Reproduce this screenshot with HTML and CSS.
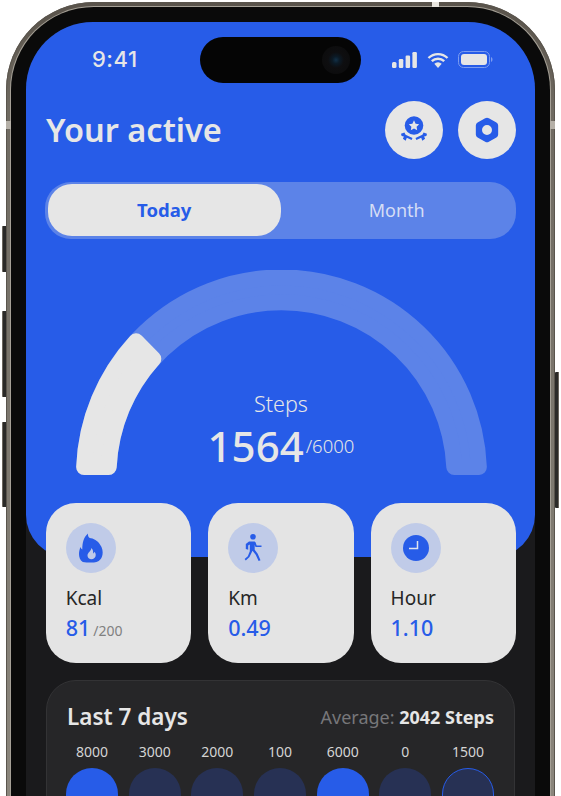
FILE: index.html
```html
<!DOCTYPE html>
<html lang="en">
<head>
    <meta charset="UTF-8">
    <meta name="viewport" content="width=device-width, initial-scale=1.0">
    <title>Your active</title>
    <link rel="stylesheet" href="styles.css">
</head>
<body>
    <div class="phone">
        <span class="side-btn btn-mute"></span>
        <span class="side-btn btn-up"></span>
        <span class="side-btn btn-down"></span>
        <span class="side-btn btn-power"></span>
        <span class="band band-left"></span>
        <span class="band band-right"></span>
        <span class="band band-top"></span>

        <div class="bezel">
            <div class="screen">
                <section class="hero">
                    <div class="status">
                        <span class="time">9:41</span>
                        <div class="island"><span class="camera"></span></div>
                        <div class="status-icons">
                            <svg width="25" height="16" viewBox="0 0 25 16">
                                <rect x="0" y="10" width="4.500" height="6" rx="1.500" fill="#e6e6e6"/>
                                <rect x="6.800" y="7" width="4.500" height="9" rx="1.200" fill="#e6e6e6"/>
                                <rect x="13.600" y="3.500" width="4.500" height="12.500" rx="1.200" fill="#e6e6e6"/>
                                <rect x="20.400" y="0" width="4.500" height="16" rx="1.200" fill="#e6e6e6"/>
                            </svg>
                            <svg width="22" height="16" viewBox="0 0 22 16">
                                <path d="M1.500 6A13.500 13.500 0 0 1 20.500 6M4.800 9.200A9 9 0 0 1 17.200 9.200" fill="none" stroke="#e6e6e6" stroke-width="2.400"/>
                                <path d="M7.300 11.800A5 5 0 0 1 14.700 11.800L11 16Z" fill="#e6e6e6"/>
                            </svg>
                            <svg width="35" height="17" viewBox="0 0 35 17">
                                <rect x="0.500" y="0.500" width="31" height="16" rx="5" fill="none" stroke="#7c9cf0"/>
                                <rect x="3" y="3" width="26" height="11" rx="3" fill="#e6e6e6"/>
                                <path d="M33 6V11C34 10.600 34.500 9.600 34.500 8.500S34 6.400 33 6Z" fill="#7c9cf0"/>
                            </svg>
                        </div>
                    </div>

                    <header class="top-row">
                        <h1>Your active</h1>
                        <div class="round-btns">
                            <div class="round-btn">
                                <svg width="30" height="30" viewBox="0 0 30 30">
                                    <circle cx="15" cy="10.500" r="9.300" fill="#275ce8"/>
                                    <path fill="#e6e6e6" d="M15 5.300l1.600 3.400 3.600.5-2.600 2.500.6 3.600-3.200-1.700-3.200 1.700.6-3.600-2.600-2.500 3.600-.5Z"/>
                                    <path fill="#275ce8" d="M2 18.800l3.400-1.200 1.200 2.100 6.900 3.300-.9 2-4.800-2.200-1.100 3-2.800-2 1-2.400-2.300-.4Z"/>
                                    <path fill="#275ce8" d="M28 18.800l-3.400-1.200-1.200 2.100-6.900 3.300.9 2 4.800-2.200 1.100 3 2.800-2-1-2.400 2.300-.4Z"/>
                                </svg>
                            </div>
                            <div class="round-btn">
                                <svg width="24" height="26" viewBox="0 0 26 28">
                                    <path fill="#275ce8" fill-rule="evenodd" d="M11 1.200a4 4 0 0 1 4 0l8.200 4.700a3.800 3.800 0 0 1 1.900 3.300v9.600a3.800 3.800 0 0 1-1.900 3.300L15 26.800a4 4 0 0 1-4 0l-8.200-4.700A3.800 3.800 0 0 1 .9 18.800V9.200a3.800 3.800 0 0 1 1.900-3.300ZM13 8.600a5.400 5.400 0 1 0 0 10.800a5.400 5.400 0 0 0 0-10.800Z"/>
                                </svg>
                            </div>
                        </div>
                    </header>

                    <div class="toggle">
                        <div class="toggle-item active">Today</div>
                        <div class="toggle-item">Month</div>
                    </div>

                    <div class="gauge">
                        <svg class="gauge-arc" width="411" height="205" viewBox="0 0 411 205">
                            <path d="M8.160 197A197.500 197.500 0 0 1 402.840 197L378.300 197A173 173 0 0 0 32.700 197Z" fill="#5c83e8" stroke="#5c83e8" stroke-width="16" stroke-linejoin="round"/>
                            <path d="M8.160 197A197.500 197.500 0 0 1 60.100 71.300L77.300 88.800A173 173 0 0 0 32.700 197Z" fill="#e6e6e6" stroke="#e6e6e6" stroke-width="16" stroke-linejoin="round"/>
                        </svg>
                        <div class="gauge-text">
                            <div class="gauge-label">Steps</div>
                            <div class="gauge-value">1564<small>/6000</small></div>
                        </div>
                    </div>
                </section>

                <div class="cards">
                    <div class="card">
                        <div class="card-icon">
                            <svg width="24" height="30" viewBox="0 0 24 30">
                                <path fill="#275ce8" fill-rule="evenodd" d="M3.800 29C1 27.300 0 24 0 21c0-2.800.8-5 1.400-7 .5 1.200 1 2 1.900 2.500C3.200 10.500 4.600 4 9 .5c-.4 3 1 4.500 3 4.800 4 .6 8 3.600 10.500 8.700 2 4.200 1.300 9.500-1 12.200C19.500 29 16 29.500 12 29.500c-3 0-6-.1-8.200-.5ZM12.300 15c.2 2.500-2.500 3.700-3.500 6-.9 2.200.3 5 3.200 5.200 3 .1 5-2 4.700-4.800-.1-1.200-.8-2.200-1.400-2.700-.1 1-.6 1.500-1.200 1.700.3-2-.2-3.900-1.800-5.400Z"/>
                            </svg>
                        </div>
                        <div class="card-name">Kcal</div>
                        <div class="card-value">81<small>/200</small></div>
                    </div>
                    <div class="card">
                        <div class="card-icon">
                            <svg width="20" height="28" viewBox="0 0 20 28" fill="#275ce8">
                                <circle cx="10" cy="2.800" r="2.800"/>
                                <path d="M6 7.500h4.800c1 0 1.700.5 2 1.400l.9 2.700h4.800v1.500h-6l-.8-2.300v5l3 4 2.800 6.500-1.900.8-2.900-6.400-3.200-3.900-3 6.300-3.700 3.400-1.200-1.400 3.200-2.900 2-5V10.400L5.200 11.500v4.300l-2.400-.8V9.900Z"/>
                            </svg>
                        </div>
                        <div class="card-name">Km</div>
                        <div class="card-value">0.49</div>
                    </div>
                    <div class="card">
                        <div class="card-icon">
                            <svg width="26" height="26" viewBox="0 0 26 26">
                                <circle cx="13" cy="13" r="13" fill="#275ce8"/>
                                <path d="M14.500 6V13.500H6" fill="none" stroke="#dfe3ee" stroke-width="1.500"/>
                            </svg>
                        </div>
                        <div class="card-name">Hour</div>
                        <div class="card-value">1.10</div>
                    </div>
                </div>

                <section class="week">
                    <div class="week-head">
                        <h2>Last 7 days</h2>
                        <div class="average">Average: <b>2042 Steps</b></div>
                    </div>
                    <div class="days">
                        <div class="day"><span>8000</span><div class="bar done"></div></div>
                        <div class="day"><span>3000</span><div class="bar"></div></div>
                        <div class="day"><span>2000</span><div class="bar"></div></div>
                        <div class="day"><span>100</span><div class="bar"></div></div>
                        <div class="day"><span>6000</span><div class="bar done"></div></div>
                        <div class="day"><span>0</span><div class="bar"></div></div>
                        <div class="day"><span>1500</span><div class="bar today"></div></div>
                    </div>
                </section>
            </div>
        </div>
    </div>
</body>
</html>
```

FILE: styles.css
```css
html, body {
    height: 796px;
    margin: 0;
    overflow: hidden;
    background-color: #fff;
}
body {
    font-family: "Noto Sans", Arial, sans-serif;
    padding: 2px 0 0 6px;
    box-sizing: border-box;
}
h1, h2 {
    margin: 0;
}

/* phone frame */
.phone {
    position: relative;
    width: 549px;
    height: 900px;
    padding: 5px;
    box-sizing: border-box;
    border-radius: 88px;
    background: linear-gradient(180deg, #59534b 0, #6f6a61 12%, #8f8a80 100%);
    box-shadow: inset 0 0 0 1px #5a554d;
}
.bezel {
    height: 100%;
    padding: 15px 15px 0;
    box-sizing: border-box;
    border-radius: 83px;
    background-color: #0a0a0a;
    box-shadow: 0 0 0 1px #a5a096;
}
.screen {
    height: 100%;
    border-radius: 67px 67px 0 0;
    background-color: #1a1a1c;
    overflow: hidden;
}
.side-btn {
    position: absolute;
    left: -4px;
    width: 4px;
    background-color: #2b2a28;
    border-left: 1px solid #6b665e;
    box-sizing: border-box;
    border-radius: 1px 0 0 1px;
}
.btn-mute { top: 224px; height: 46px; }
.btn-up { top: 309px; height: 86px; }
.btn-down { top: 420px; height: 85px; }
.btn-power {
    left: auto;
    right: -4px;
    top: 370px;
    height: 136px;
    border-left: none;
    border-right: 1px solid #6b665e;
}
.band {
    position: absolute;
    background-color: #b5b0a7;
}
.band-left { left: 0; top: 119px; width: 5px; height: 8px; }
.band-right { right: 0; top: 119px; width: 5px; height: 8px; }
.band-top { left: 426px; top: 0; width: 7px; height: 5px; background-color: #e8e5df; }

/* blue part */
.hero {
    height: 535px;
    padding: 15px 19px 0 20px;
    box-sizing: border-box;
    background-color: #275ce8;
    border-radius: 0 0 42px 42px;
    color: #e6e6e6;
}
.status {
    display: flex;
    align-items: center;
    height: 46px;
}
.time {
    width: 154px;
    margin-bottom: 2px;
    padding-left: 46px;
    box-sizing: border-box;
    font-family: Inter, sans-serif;
    font-size: 22px;
    font-weight: 500;
    letter-spacing: 0.5px;
}
.island {
    display: flex;
    align-items: center;
    justify-content: flex-end;
    width: 161px;
    height: 46px;
    padding-right: 11px;
    box-sizing: border-box;
    border-radius: 23px;
    background-color: #050505;
}
.camera {
    width: 28px;
    height: 28px;
    border-radius: 50%;
    background: radial-gradient(circle, #123047 0, #0b1a26 18%, #0e0e10 40%, #0b0b0b 100%);
}
.status-icons {
    display: flex;
    align-items: center;
    gap: 10px;
    margin: 0 0 1px 31px;
}
.status-icons svg:last-child {
    margin-left: -1px;
}
.top-row {
    display: flex;
    justify-content: space-between;
    align-items: center;
    margin-top: 18px;
}
.top-row h1 {
    font-size: 32.5px;
    font-weight: 600;
    line-height: 58px;
}
.round-btns {
    display: flex;
    gap: 15px;
}
.round-btn {
    display: flex;
    align-items: center;
    justify-content: center;
    width: 58px;
    height: 58px;
    border-radius: 50%;
    background-color: #e6e6e6;
}
.toggle {
    display: flex;
    margin: 23px 0 0 -1px;
    padding: 2px 3px;
    width: 471px;
    height: 57px;
    box-sizing: border-box;
    border-radius: 26px;
    background-color: #5c83e8;
}
.toggle-item {
    flex: 1;
    height: 52px;
    border-radius: 24px;
    font-size: 18px;
    line-height: 52px;
    text-align: center;
    color: #d5ddf5;
}
.toggle-item.active {
    background-color: #e6e6e6;
    color: #275ce8;
    font-size: 18.5px;
    font-weight: 700;
}

/* gauge */
.gauge {
    display: grid;
    width: 411px;
    height: 205px;
    margin: 31px 0 0 29.5px;
}
.gauge-arc, .gauge-text {
    grid-area: 1 / 1;
}
.gauge-arc {
    display: block;
}
.gauge-text {
    align-self: end;
    text-align: center;
}
.gauge-label {
    font-size: 21.5px;
    line-height: 26px;
    font-weight: 300;
}
.gauge-value {
    font-size: 42px;
    line-height: 58px;
    font-weight: 500;
}
.gauge-value small {
    margin-left: 2px;
    font-size: 18.5px;
    font-weight: 300;
    vertical-align: 9px;
}

/* cards */
.cards {
    display: flex;
    gap: 17px;
    margin: -54px 19px 0 19.7px;
    position: relative;
}
.card {
    flex: 1;
    height: 160px;
    padding: 20px;
    box-sizing: border-box;
    border-radius: 30px;
    background-color: #e4e4e4;
}
.card-icon {
    display: flex;
    align-items: center;
    justify-content: center;
    width: 50px;
    height: 50px;
    border-radius: 50%;
    background-color: #c0cbe8;
}
.card-name {
    margin-top: 12px;
    font-size: 19px;
    line-height: 26px;
    color: #262626;
}
.card-value {
    margin-top: 2px;
    font-size: 21.5px;
    line-height: 30px;
    font-weight: 500;
    color: #275ce8;
}
.card-value small {
    margin-left: 3px;
    font-size: 14px;
    font-weight: 400;
    color: #808080;
}

/* last 7 days */
.week {
    margin: 17px 20px 0;
    padding: 20px 20px 0;
    height: 200px;
    box-sizing: border-box;
    border: 1px solid #333335;
    border-radius: 30px;
    background-color: #262628;
}
.week-head {
    display: flex;
    justify-content: space-between;
    align-items: center;
    line-height: 32px;
}
.week-head h2 {
    font-size: 22.5px;
    font-weight: 600;
    color: #e6e6e6;
}
.average {
    font-size: 18px;
    color: #77777a;
}
.average b {
    font-weight: 700;
    color: #e6e6e6;
}
.days {
    display: flex;
    gap: 10.7px;
    margin: 9px 0 0 -1px;
}
.day {
    width: 52px;
    font-size: 14px;
    line-height: 20px;
    text-align: center;
    color: #d4d4d4;
}
.bar {
    height: 120px;
    margin-top: 6px;
    box-sizing: border-box;
    border-radius: 26px 26px 0 0;
    background-color: #273154;
}
.bar.done {
    background-color: #275ce8;
}
.bar.today {
    border: 1px solid #275ce8;
}
```
